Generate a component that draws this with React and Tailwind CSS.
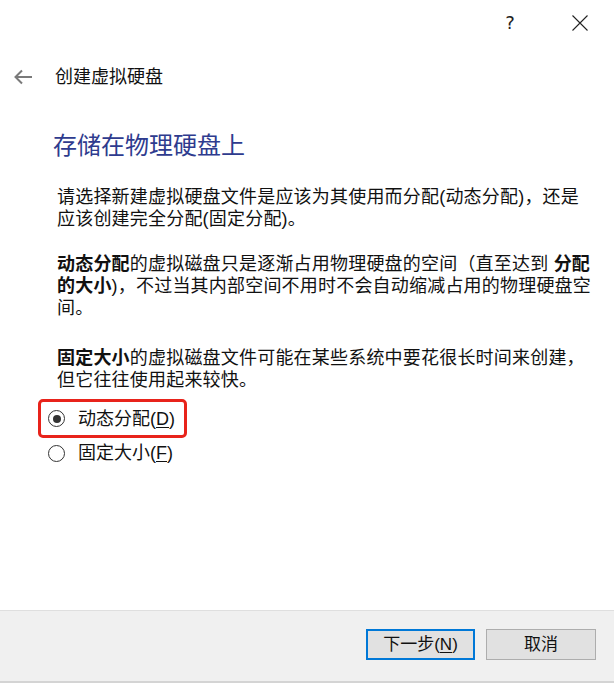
import React from 'react';

// 创建虚拟硬盘向导：存储在物理硬盘上（动态 / 固定）

const font = { fontFamily: '"Liberation Sans", "Noto Sans CJK SC", sans-serif' };

function Radio({ checked, label, mnemonic }) {
  return (
    <div className="flex items-center gap-[13px]">
      <span className="w-[17px] h-[17px] rounded-full border-[1.5px] border-[#333] flex items-center justify-center bg-white">
        {checked && <span className="w-[8px] h-[8px] rounded-full bg-[#333]" />}
      </span>
      <span className="text-[18px] leading-[22px] text-[#111]">
        {label}(<span className="underline underline-offset-2">{mnemonic}</span>)
      </span>
    </div>
  );
}

// one visual line of the description text
function Line({ children }) {
  return <div className="h-[22px] leading-[22px] whitespace-nowrap tracking-[0.2px]">{children}</div>;
}

function B({ children }) {
  return <b className="inline-block align-top h-[22px] leading-[22px] font-bold">{children}</b>;
}

export default function App() {
  return (
    <div className="w-[614px] h-[683px] flex flex-col bg-white text-black" style={font}>
      {/* title bar */}
      <div className="h-[45px] shrink-0 flex items-center justify-end pr-[11px]">
        <div className="w-[46px] h-[30px] flex items-center justify-center text-[18px] text-[#222]" style={{ fontFamily: '"DejaVu Sans", sans-serif' }}>?</div>
        <div className="w-[24px]" />
        <div className="w-[46px] h-[30px] flex items-center justify-center">
          <svg width="16" height="16" viewBox="0 0 16 16" fill="none" stroke="#222" strokeWidth="1.1">
            <path d="M0.5 0.5 L15.5 15.5 M15.5 0.5 L0.5 15.5" />
          </svg>
        </div>
      </div>

      {/* wizard title */}
      <div className="mt-[20px] h-[24px] flex items-center pl-[13px] gap-[23px]">
        <svg width="19" height="16" viewBox="0 0 19 16" fill="none" stroke="#7a7a7a" strokeWidth="2">
          <path d="M19 8 H2.5 M9 1.5 L2.5 8 L9 14.5" />
        </svg>
        <span className="text-[18px] leading-[24px] text-[#111]">创建虚拟硬盘</span>
      </div>

      <div className="pl-[53px] mt-[41px]">
        <h1 className="text-[24px] leading-[32px] font-normal text-[#2e3b8e]">存储在物理硬盘上</h1>
      </div>

      <div className="pl-[57px] pr-[20px] text-[18px] text-[#111]">
        <div className="mt-[24px]">
          <Line>请选择新建虚拟硬盘文件是应该为其使用而分配(动态分配)，还是</Line>
          <Line>应该创建完全分配(固定分配)。</Line>
        </div>
        <div className="mt-[23px]">
          <Line><B>动态分配</B>的虚拟磁盘只是逐渐占用物理硬盘的空间（直至达到 <B>分配</B></Line>
          <Line><B>的大小</B>)，不过当其内部空间不用时不会自动缩减占用的物理硬盘空</Line>
          <Line>间。</Line>
        </div>
        <div className="mt-[28px]">
          <Line><B>固定大小</B>的虚拟磁盘文件可能在某些系统中要花很长时间来创建，</Line>
          <Line>但它往往使用起来较快。</Line>
        </div>
      </div>

      <div className="mt-[8px] ml-[38px] w-[149px] h-[39px] border-[3px] border-[#e8231b] rounded-[5px] flex items-center pl-[7px]">
        <Radio checked label="动态分配" mnemonic="D" />
      </div>
      <div className="h-[30px] flex items-center pl-[48px]">
        <Radio label="固定大小" mnemonic="F" />
      </div>

      <div className="flex-1" />

      {/* footer */}
      <div className="h-[73px] shrink-0 bg-[#f0f0f0] border-t border-[#dfdfdf] border-b-2 border-b-[#d4d4d4] flex justify-end items-start pt-[18px] pr-[18px] gap-[11px]">
        <button className="w-[109px] h-[31px] border-2 border-[#0078d7] bg-[#e1e1e1] text-[17px] leading-none text-[#111]">
          下一步(<span className="underline underline-offset-2">N</span>)
        </button>
        <button className="w-[110px] h-[31px] border border-[#adadad] bg-[#e1e1e1] text-[17px] leading-none text-[#111]">
          取消
        </button>
      </div>
    </div>
  );
}
